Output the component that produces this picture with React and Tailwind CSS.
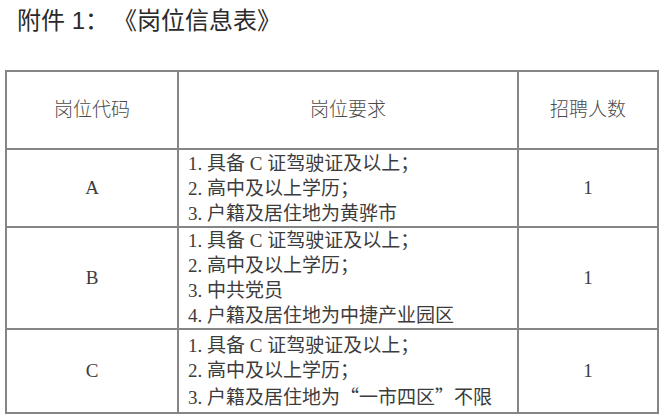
import React from 'react';

const rows = [
    {
        code: 'A',
        lines: ['1. 具备 C 证驾驶证及以上；', '2. 高中及以上学历；', '3. 户籍及居住地为黄骅市'],
        count: '1',
        h: 'h-[78px]',
    },
    {
        code: 'B',
        lines: ['1. 具备 C 证驾驶证及以上；', '2. 高中及以上学历；', '3. 中共党员', '4. 户籍及居住地为中捷产业园区'],
        count: '1',
        h: 'h-[102px]',
    },
    {
        code: 'C',
        lines: ['1. 具备 C 证驾驶证及以上；', '2. 高中及以上学历；', ['3. 户籍及居住地为', '“', '一市四区', '”', '不限']],
        count: '1',
        h: 'h-[84px]',
    },
];

const serif = "font-['Liberation_Serif','Noto_Sans_CJK_SC',serif]";
const sans = "font-['Liberation_Sans','Noto_Sans_CJK_SC',sans-serif]";

// curly quotes have to come from the CJK font to get full width
function Line({ l }) {
    if (typeof l === 'string') return l;
    return l.map((part, i) =>
        part === '“' || part === '”' ? (
            <span key={i} className="font-['Noto_Sans_CJK_SC',sans-serif]">{part}</span>
        ) : (
            <span key={i}>{part}</span>
        )
    );
}

export default function App() {
    return (
        <div className="w-[660px] h-[415px] bg-white overflow-hidden text-[#3c3c3c] [text-spacing-trim:space-all]">
            <div className={`${sans} pl-[17px] pt-[4px] h-[70px] text-[24px] leading-[33px] text-[#2a2a2a] whitespace-pre`}>
                附件 <span className="font-medium">1</span>：<span className="ml-[4px]">《岗位信息表》</span>
            </div>
            <table className="ml-[5px] w-[652px] table-fixed border-collapse">
                <colgroup>
                    <col className="w-[172px]" />
                    <col className="w-[340px]" />
                    <col className="w-[140px]" />
                </colgroup>
                <thead>
                    <tr className={`${sans} h-[78px] text-[19px] text-[#4a4a4a]`}>
                        <th className="border-2 border-[#858585] font-light">岗位代码</th>
                        <th className="border-2 border-[#858585] font-light">岗位要求</th>
                        <th className="border-2 border-[#858585] font-light">招聘人数</th>
                    </tr>
                </thead>
                <tbody className={`${serif} text-[19px]`}>
                    {rows.map((r) => (
                        <tr key={r.code} className={r.h}>
                            <td className="border-2 border-[#858585] text-center">{r.code}</td>
                            <td className="border-2 border-[#858585] pl-[9px] align-middle">
                                {r.lines.map((l, i) => (
                                    <div key={i} className="leading-[25px] whitespace-nowrap">
                                        <Line l={l} />
                                    </div>
                                ))}
                            </td>
                            <td className="border-2 border-[#858585] text-center">{r.count}</td>
                        </tr>
                    ))}
                </tbody>
            </table>
        </div>
    );
}
